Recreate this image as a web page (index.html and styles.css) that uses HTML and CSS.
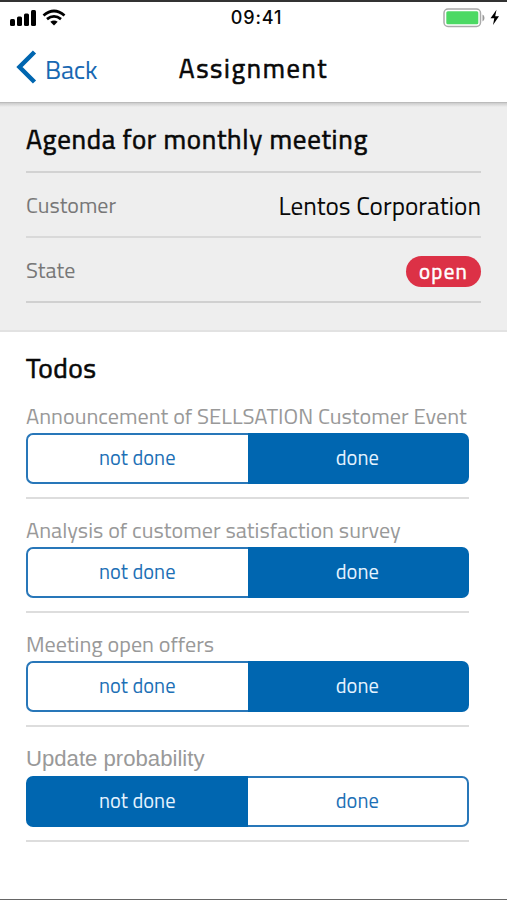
FILE: index.html
```html
<!DOCTYPE html>
<html lang="en">
<head>
<meta charset="utf-8">
<title>Assignment</title>
<link rel="stylesheet" href="styles.css">
</head>
<body>
<div class="screen">
  <header class="header">
    <div class="status">
      <svg class="signal" width="58" height="20" viewBox="0 0 58 20">
        <rect x="0" y="11" width="5" height="7" rx="1.5"/>
        <rect x="7" y="8.500" width="5" height="9.500" rx="1.500"/>
        <rect x="14" y="5.500" width="5" height="12.500" rx="1.500"/>
        <rect x="21" y="2" width="5" height="16" rx="1.500"/>
        <path d="M33.500 7.500Q44 -1.500 54.500 7.500M37 11.200Q44 5.500 51 11.200" fill="none" stroke="#000" stroke-width="2.800"/>
        <path d="M40.300 13.800Q44 11.300 47.700 13.800L44 17.600Z"/>
      </svg>
      <span class="time">09:41</span>
      <svg class="battery" width="56" height="20" viewBox="0 0 56 20">
        <rect x="1" y="1" width="36.500" height="17.500" rx="4" fill="#fff" stroke="#aaa" stroke-width="1.500"/>
        <rect x="3.300" y="3.300" width="32" height="13" rx="1.500" fill="#4cd964"/>
        <path d="M39.500 6.500q2 .8 2 3.500t-2 3.500z" fill="#999"/>
        <path d="M53.500 1.800L47.500 10.200H51.300L50 17L56 8.300H52.200Z"/>
      </svg>
    </div>
    <div class="nav">
      <a class="back"><svg width="21" height="34" viewBox="0 0 21 34"><path d="M18.500 2L3.500 17L18.500 32" fill="none" stroke="#0066b0" stroke-width="4.500"/></svg><span>Back</span></a>
      <span class="title">Assignment</span>
    </div>
  </header>
  <section class="info">
    <h1 class="subject">Agenda for monthly meeting</h1>
    <div class="row"><span class="key">Customer</span><span class="company">Lentos Corporation</span></div>
    <div class="row last"><span class="key">State</span><span class="badge">open</span></div>
  </section>
  <section class="todos">
    <h2 class="heading">Todos</h2>
    <div class="todo"><div class="label">Announcement of SELLSATION Customer Event</div><div class="seg"><span class="opt">not done</span><span class="opt on">done</span></div></div>
    <div class="todo"><div class="label">Analysis of customer satisfaction survey</div><div class="seg"><span class="opt">not done</span><span class="opt on">done</span></div></div>
    <div class="todo"><div class="label">Meeting open offers</div><div class="seg"><span class="opt">not done</span><span class="opt on">done</span></div></div>
    <div class="todo"><div class="label plain">Update probability</div><div class="seg"><span class="opt on">not done</span><span class="opt">done</span></div></div>
  </section>
</div>
</body>
</html>
```
FILE: styles.css
```css
* { box-sizing: border-box; }
body { margin: 0; background: #fff; color: #080808; font-family: "Titillium Web", Roboto, sans-serif; }
.screen { height: 900px; border-top: 2px solid #333; border-bottom: 1px solid #666; overflow: hidden; white-space: nowrap; }
.header { height: 101px; border-bottom: 1px solid #bbb; background: #fff; }
.status { display: grid; grid-template-columns: 1fr auto 1fr; align-items: center; height: 32px; padding: 0 8px 0 10px; }
.battery { justify-self: end; }
.time { font: 500 18px/32px Inter, sans-serif; letter-spacing: .9px; margin-left: 4px; }
.nav { display: grid; grid-template-columns: 1fr auto 1fr; align-items: center; height: 66px; padding: 0 16px; }
.back { display: flex; align-items: center; gap: 8px; color: #1768b2; font-size: 26.200px; line-height: 34px; letter-spacing: -.2px; }
.back span { padding-top: 4px; }
.title, .subject, .heading { font-weight: 400; line-height: 34px; -webkit-text-stroke: .6px currentColor; }
.title { font-size: 26.500px; letter-spacing: 1.650px; padding-top: 2px; }
.info { height: 229px; padding: 0 26px; background: linear-gradient(#ccc, #eee 4px); border-bottom: 2px solid #e2e2e2; }
.subject { height: 70px; margin: 0; padding-top: 19px; font-size: 27px; letter-spacing: .7px; border-bottom: 2px solid #d2d2d2; }
.row { display: flex; justify-content: space-between; align-items: center; height: 65px; border-bottom: 2px solid #d9d9d9; }
.last { border-color: #d0d0d0; }
.key { font-size: 22px; color: #777; }
.company { font-size: 25.250px; padding-top: 1px; }
.badge { width: 75px; height: 31px; margin-top: 4px; border-radius: 16px; background: #dc3146; color: #fff; font-size: 21px; line-height: 30px; letter-spacing: 1.200px; text-align: center; -webkit-text-stroke: .5px currentColor; }
.todos { padding: 0 38px 0 26px; }
.heading { height: 69px; margin: 0; padding-top: 19px; font-size: 27.500px; letter-spacing: .4px; }
.todo { height: 98px; margin-bottom: 16.200px; border-bottom: 2px solid #ddd; }
.label { height: 32px; font-size: 22.150px; line-height: 30px; color: #999; }
.plain { font-family: "Liberation Sans", Arial, sans-serif; }
.seg { display: grid; grid-template-columns: 1fr 1fr; height: 51px; }
.opt { border: 2px solid #2877b9; background: #fff; color: #1d70b6; font-size: 20.500px; line-height: 46px; text-align: center; }
.opt:first-child { border-right: 0; border-radius: 7px 0 0 7px; padding-right: 1px; }
.opt:last-child { border-left: 0; border-radius: 0 7px 7px 0; }
.opt.on { border-color: #0066b0; background: #0066b0; color: #e5f3ff; }
```
